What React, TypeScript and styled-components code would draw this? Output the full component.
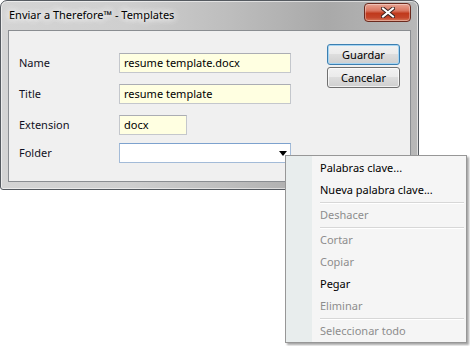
import React from 'react'
import styled, { createGlobalStyle } from 'styled-components'

const GlobalStyle = createGlobalStyle`
  html, body {
    margin: 0;
    padding: 0;
    background: #ffffff;
  }
  body {
    font-family: 'Noto Sans', 'Open Sans', sans-serif;
    font-size: 11px;
  }
`

const Stage = styled.div`
  position: relative;
  width: 470px;
  height: 346px;
  overflow: hidden;
`

const Window = styled.div`
  box-sizing: border-box;
  width: 419px;
  height: 190px;
  display: flex;
  flex-direction: column;
  border: 1px solid #555a60;
  border-radius: 7px 7px 3px 3px;
  padding: 0 7px 7px 7px;
  background: linear-gradient(
    90deg,
    #d4d4d4 0%,
    #cfcfcf 30%,
    #bdbdbd 55%,
    #a9a9a9 78%,
    #b8b8b8 100%
  );
  box-shadow: inset 0 0 0 1px rgba(255, 255, 255, 0.55);
`

const TitleBar = styled.div`
  height: 29px;
  display: flex;
  align-items: center;
  justify-content: space-between;
`

const TitleText = styled.span`
  font-size: 11px;
  color: #000;
  padding-left: 1px;
  margin-top: -2px;
  text-shadow: 0 0 6px #ffffff, 0 0 8px #ffffff, 0 0 10px rgba(255, 255, 255, 0.9);
`

const CloseButton = styled.div`
  box-sizing: border-box;
  align-self: flex-start;
  width: 47px;
  height: 19px;
  margin-top: 2px;
  border: 1px solid #6b2a1e;
  border-radius: 4px;
  background: linear-gradient(180deg, #e8a493 0%, #d9755f 40%, #c0391c 55%, #c4452a 80%, #d77a5b 100%);
  box-shadow: inset 0 0 0 1px rgba(255, 255, 255, 0.35);
  display: flex;
  align-items: center;
  justify-content: center;
`

const Client = styled.div`
  flex: 1;
  display: flex;
  align-items: flex-start;
  justify-content: space-between;
  border: 1px solid #8a8d91;
  background: #f0f0f0;
  padding: 13px 10px 0 10px;
`

const Form = styled.div`
  display: grid;
  grid-template-columns: 100px 172px;
  align-items: center;
  align-content: start;
  margin-top: 9px;
`

const Label = styled.label<{ $gap: number }>`
  color: #101024;
  margin-top: ${(p) => p.$gap}px;
  transform: translateY(-1px);
`

const FieldCell = styled.div<{ $gap: number }>`
  margin-top: ${(p) => p.$gap}px;
`

const TextBox = styled.div<{ $width: number }>`
  box-sizing: border-box;
  width: ${(p) => p.$width}px;
  height: 20px;
  border: 1px solid #c4c7cc;
  border-top-color: #abadb3;
  background: #ffffe1;
  padding: 0 4px;
  line-height: 18px;
  color: #000;
  white-space: nowrap;
`

const ComboBox = styled.div`
  box-sizing: border-box;
  position: relative;
  width: 172px;
  height: 20px;
  border: 1px solid #a3bbd8;
  border-top-color: #7da2ce;
  background: #ffffff;
`

const ComboArrow = styled.span`
  position: absolute;
  right: 3px;
  top: 7px;
  width: 0;
  height: 0;
  border-left: 4px solid transparent;
  border-right: 4px solid transparent;
  border-top: 5px solid #000;
`

const ButtonColumn = styled.div`
  display: flex;
  flex-direction: column;
  gap: 2px;
`

const PushButton = styled.button<{ $focused?: boolean }>`
  box-sizing: border-box;
  width: 73px;
  height: 21px;
  padding: 0;
  font-family: inherit;
  font-size: 11px;
  color: #000;
  border-radius: 3px;
  border: 1px solid ${(p) => (p.$focused ? '#3c7fb1' : '#707070')};
  background: linear-gradient(180deg, #f2f2f2 0%, #ebebeb 45%, #dddddd 50%, #cfcfcf 100%);
  box-shadow: ${(p) =>
    p.$focused ? 'inset 0 0 0 1px #a6d5f3' : 'inset 0 0 0 1px rgba(255,255,255,0.7)'};
`

const Menu = styled.div`
  position: absolute;
  left: 285px;
  top: 155px;
  box-sizing: border-box;
  width: 182px;
  height: 188px;
  padding: 1px 2px 0 1px;
  border: 1px solid #979797;
  background: linear-gradient(90deg, #e8eded 0, #e8eded 26px, #f5f5f5 26px);
  box-shadow: 2px 2px 2px rgba(0, 0, 0, 0.35);
`

const MenuItem = styled.div<{ $disabled?: boolean }>`
  height: 22px;
  line-height: 22px;
  padding-left: 33px;
  color: ${(p) => (p.$disabled ? '#8d8d8d' : '#000')};
  white-space: nowrap;
`

const MenuSeparator = styled.div`
  height: 0;
  margin: 1px 0 0 33px;
  border-top: 1px solid #d7d7d7;
  border-bottom: 1px solid #ffffff;
`

const fields = [
  { label: 'Name', value: 'resume template.docx', width: 172, gap: 0 },
  { label: 'Title', value: 'resume template', width: 172, gap: 11 },
  { label: 'Extension', value: 'docx', width: 68, gap: 11 },
]

export default function App() {
  return (
    <>
      <GlobalStyle />
      <Stage>
        <Window>
          <TitleBar>
            <TitleText>Enviar a Therefore™ - Templates</TitleText>
            <CloseButton>
              <svg width="14" height="11" viewBox="0 0 14 11">
                <path
                  d="M2 1.5 L12 9.5 M12 1.5 L2 9.5"
                  stroke="#3b2320"
                  strokeWidth="4"
                  strokeLinecap="square"
                />
                <path
                  d="M2 1.5 L12 9.5 M12 1.5 L2 9.5"
                  stroke="#ffffff"
                  strokeWidth="2"
                  strokeLinecap="square"
                />
              </svg>
            </CloseButton>
          </TitleBar>
          <Client>
            <Form>
              {fields.map((f) => (
                <React.Fragment key={f.label}>
                  <Label $gap={f.gap}>{f.label}</Label>
                  <FieldCell $gap={f.gap}>
                    <TextBox $width={f.width}>{f.value}</TextBox>
                  </FieldCell>
                </React.Fragment>
              ))}
              <Label $gap={8}>Folder</Label>
              <FieldCell $gap={8}>
                <ComboBox>
                  <ComboArrow />
                </ComboBox>
              </FieldCell>
            </Form>
            <ButtonColumn>
              <PushButton $focused>Guardar</PushButton>
              <PushButton>Cancelar</PushButton>
            </ButtonColumn>
          </Client>
        </Window>
        <Menu>
          <MenuItem>Palabras clave...</MenuItem>
          <MenuItem>Nueva palabra clave...</MenuItem>
          <MenuSeparator />
          <MenuItem $disabled>Deshacer</MenuItem>
          <MenuSeparator />
          <MenuItem $disabled>Cortar</MenuItem>
          <MenuItem $disabled>Copiar</MenuItem>
          <MenuItem>Pegar</MenuItem>
          <MenuItem $disabled>Eliminar</MenuItem>
          <MenuSeparator />
          <MenuItem $disabled>Seleccionar todo</MenuItem>
        </Menu>
      </Stage>
    </>
  )
}
